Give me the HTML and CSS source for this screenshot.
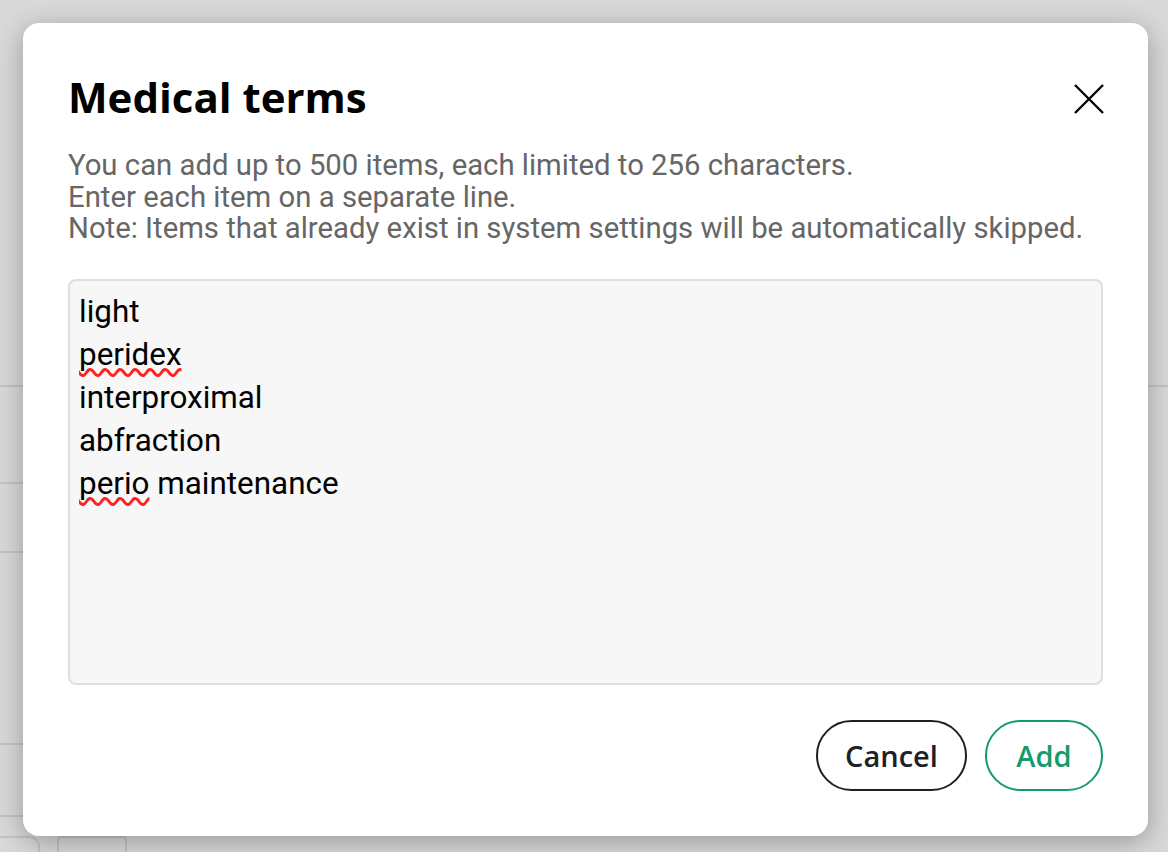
FILE: index.html
```html
<!DOCTYPE html>
<html lang="en">
<head>
  <meta charset="UTF-8">
  <title>Medical terms</title>
  <link rel="stylesheet" href="styles.css">
</head>
<body>

  <div class="backdrop">
    <div class="bg-line l1"></div>
    <div class="bg-line l2"></div>
    <div class="bg-line l3"></div>
    <div class="bg-line l4"></div>
    <div class="bg-line l5"></div>
    <div class="bg-box b1"></div>
    <div class="bg-box b2"></div>
  </div>

  <div class="dialog">
    <div class="dialog-head">
      <h1>Medical terms</h1>
      <button class="close" aria-label="Close">
        <svg width="32" height="32" viewBox="0 0 32 32">
          <path d="M2 2 L30 30 M30 2 L2 30" stroke="#000" stroke-width="2.4" fill="none"/>
        </svg>
      </button>
    </div>

    <p class="hint">
      You can add up to 500 items, each limited to 256 characters.<br>
      Enter each item on a separate line.<br>
      Note: Items that already exist in system settings will be automatically skipped.
    </p>

    <div class="terms">
      <div class="term"><span>light</span></div>
      <div class="term"><span class="typo">peridex</span></div>
      <div class="term"><span>interproximal</span></div>
      <div class="term"><span>abfraction</span></div>
      <div class="term"><span class="typo">perio</span> maintenance</div>
    </div>

    <div class="actions">
      <button class="btn btn-cancel">Cancel</button>
      <button class="btn btn-add">Add</button>
    </div>
  </div>

</body>
</html>
```

FILE: styles.css
```css
html, body {
  margin: 0;
  padding: 0;
  height: 100%;
}

body {
  background: #d9d9d9;
  font-family: 'Roboto', sans-serif;
  overflow: hidden;
  position: relative;
}

/* faint page behind the overlay */
.backdrop {
  position: absolute;
  inset: 0;
}

.bg-line {
  position: absolute;
  left: 0;
  height: 2px;
  background: #c4c4c4;
}

.l1 { top: 385px; width: 100%; }
.l2 { top: 482px; width: 30px; }
.l3 { top: 551px; width: 30px; }
.l4 { top: 743px; width: 30px; }
.l5 { top: 815px; width: 30px; }

.bg-box {
  position: absolute;
  top: 836px;
  height: 40px;
  border: 2px solid #c4c4c4;
  border-radius: 10px;
}

.b1 { left: -20px; width: 56px; }
.b2 { left: 57px; width: 66px; border-radius: 4px; }

.dialog {
  position: absolute;
  left: 23px;
  top: 23px;
  width: 1125px;
  height: 813px;
  box-sizing: border-box;
  background: #fff;
  border-radius: 16px;
  box-shadow: 0 6px 28px rgba(0, 0, 0, 0.3);
  padding: 0 45px;
  display: flex;
  flex-direction: column;
}

.dialog-head {
  display: flex;
  justify-content: space-between;
  height: 134px;
}

h1 {
  font-family: 'Open Sans', sans-serif;
  font-weight: 700;
  font-size: 42px;
  color: #000;
  margin: 46px 0 0 0;
  line-height: 56px;
}

.close {
  background: none;
  border: none;
  padding: 0;
  margin: 60px -2px 0 0;
  align-self: flex-start;
  cursor: pointer;
}

.close svg {
  display: block;
}

.hint {
  font-size: 29.3px;
  line-height: 31.5px;
  color: #666;
  margin: -7px 0 0 0;
}

.terms {
  margin-top: 34px;
  height: 406px;
  box-sizing: border-box;
  background: #f7f7f7;
  border: 2px solid #dedede;
  border-radius: 8px;
  padding: 9px 9px;
  font-size: 31.4px;
  line-height: 43px;
  color: #000;
}

.typo {
  text-decoration: underline wavy #f22;
  text-decoration-thickness: 2.5px;
  text-decoration-skip-ink: none;
  text-underline-offset: 3px;
}

.actions {
  display: flex;
  justify-content: flex-end;
  gap: 18px;
  margin-top: 35px;
}

.btn {
  height: 71px;
  border-radius: 36px;
  background: #fff;
  font-family: 'Open Sans', sans-serif;
  font-weight: 600;
  font-size: 29px;
  padding: 0 20px;
  border: 2px solid;
  cursor: pointer;
}

.btn-cancel {
  color: #1e2028;
  border-color: #1e2028;
  width: 151px;
}

.btn-add {
  color: #159a6c;
  border-color: #159a6c;
  width: 118px;
}
```
